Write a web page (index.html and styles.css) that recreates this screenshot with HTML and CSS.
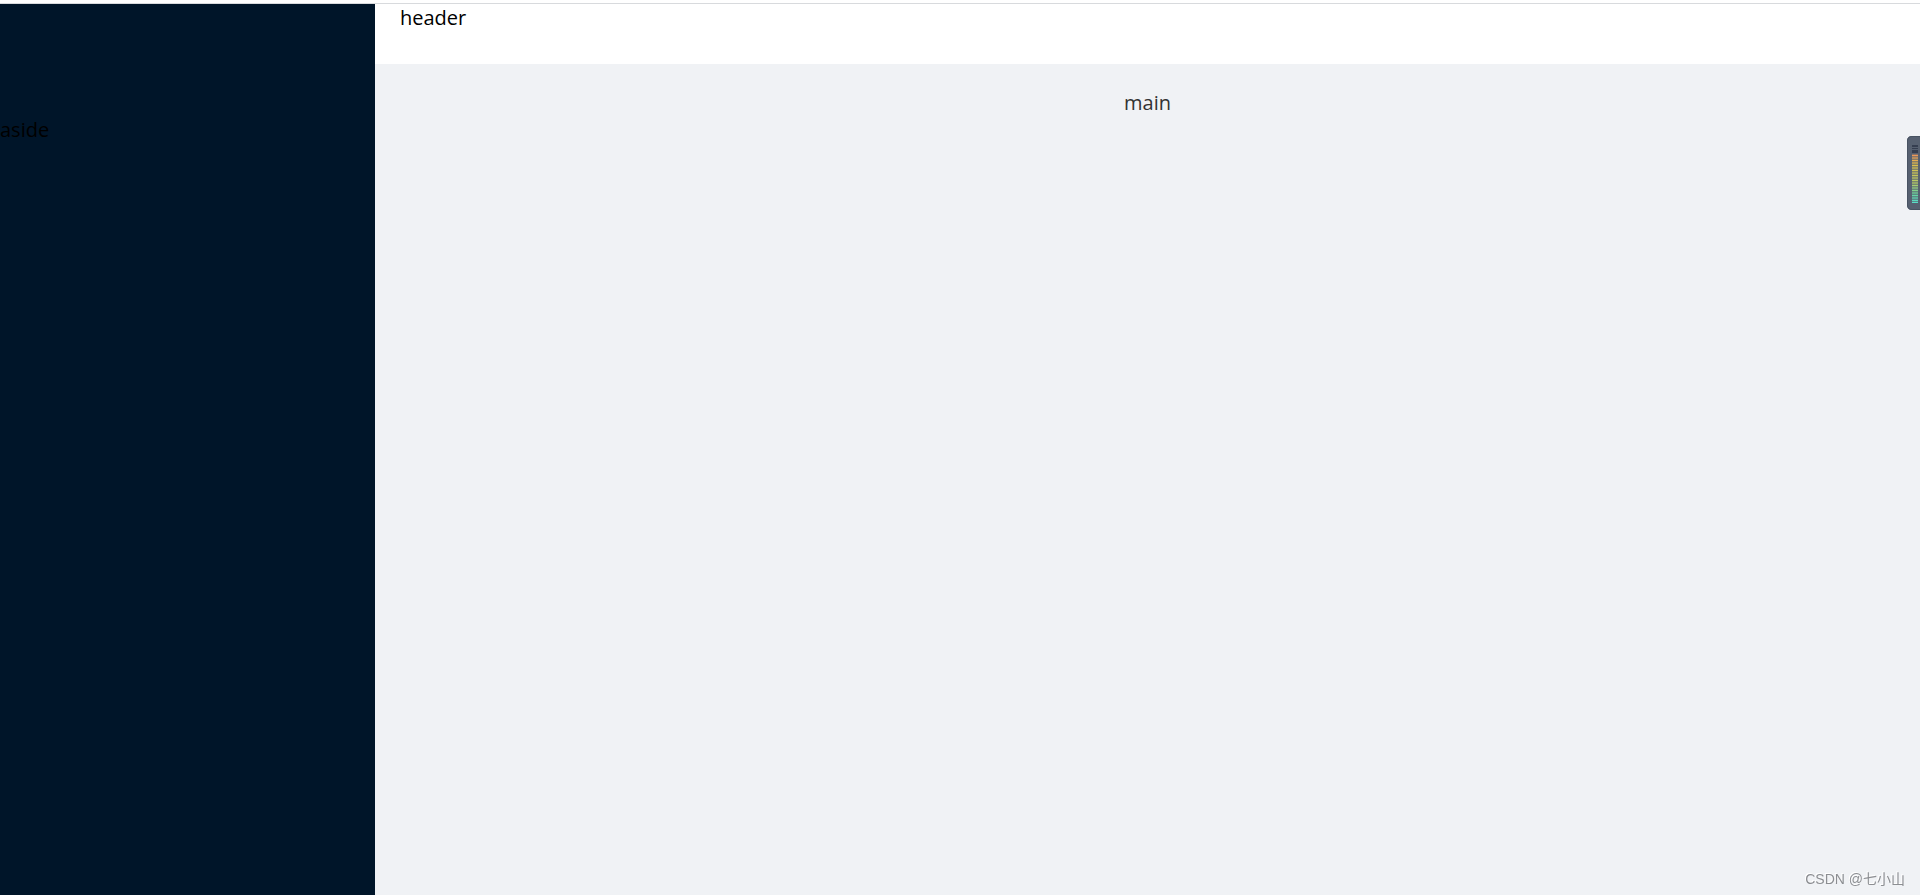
FILE: index.html
```html
<!DOCTYPE html>
<html lang="en">
<head>
<meta charset="utf-8">
<title>Layout</title>
<link rel="stylesheet" href="styles.css">
</head>
<body>
<div class="layout">
  <aside class="sidebar">aside</aside>
  <div class="content">
    <header class="header">header</header>
    <main class="main">main</main>
  </div>
</div>
<svg class="meter" width="13" height="74" viewBox="0 0 13 74" aria-hidden="true">
  <defs>
    <linearGradient id="levels" gradientUnits="userSpaceOnUse" x1="0" y1="18" x2="0" y2="67">
      <stop offset="0" stop-color="#f0935a"/>
      <stop offset=".22" stop-color="#dcc04c"/>
      <stop offset=".6" stop-color="#b4cc68"/>
      <stop offset=".82" stop-color="#68d4a0"/>
      <stop offset="1" stop-color="#58dcc8"/>
    </linearGradient>
  </defs>
  <path d="M13 0H5Q0 0 0 5V69Q0 74 5 74H13Z" fill="#566070"/>
  <path d="M13 .5H5Q.5 .5 .5 5V69Q.5 73.500 5 73.500H13" fill="none" stroke="#485362"/>
  <path d="M5 9h6v2H5zM5 12h6v1H5zM5 14h6v3H5z" fill="#353e50"/>
  <path d="M5 18h6v49H5z" fill="url(#levels)" opacity=".35"/>
  <path d="M5 19.500h6M5 24.500h6M5 29.500h6M5 34.500h6M5 39.500h6M5 44.500h6M5 49.500h6M5 54.500h6M5 59.500h6M5 64.500h6M5 22h6M5 27h6M5 32h6M5 37h6M5 42h6M5 47h6M5 52h6M5 57h6M5 62h6M5 66.500h6" fill="none" stroke="url(#levels)"/>
</svg>
<div class="watermark">CSDN @七小山</div>
</body>
</html>
```
FILE: styles.css
```css
body {
  margin: 0;
  font-family: "Open Sans", "Noto Sans", sans-serif;
  font-size: 20px;
  line-height: 28px;
  color: #000;
}

.layout {
  display: flex;
  box-sizing: border-box;
  min-height: calc(100vh - 3px);
  margin-top: 3px;
  border-top: 1px solid #d8dadd;
}

.sidebar {
  box-sizing: border-box;
  flex: 0 0 375px;
  padding-top: 112px;
  background: #001529;
}

.content {
  display: flex;
  flex: 1;
  flex-direction: column;
}

.header {
  box-sizing: border-box;
  height: 60px;
  padding: 0 25px;
  background: #fff;
}

.main {
  flex: 1;
  padding: 25px;
  background: #f0f2f5;
  color: #333;
  text-align: center;
}

.meter {
  position: fixed;
  top: 136px;
  right: 0;
}

.watermark {
  position: fixed;
  right: 15px;
  bottom: 6px;
  font: 14px/20px "Liberation Sans", "Noto Sans CJK SC", sans-serif;
  color: #8c8e92;
  text-shadow: -1px -1px 0 #fff;
}
```
